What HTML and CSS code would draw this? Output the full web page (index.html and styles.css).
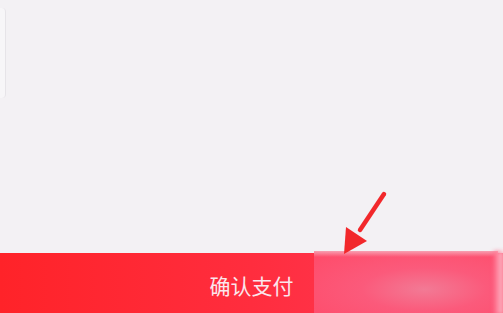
FILE: index.html
```html
<!DOCTYPE html>
<html lang="zh-CN">
<head>
<meta charset="utf-8">
<link rel="stylesheet" href="styles.css">
</head>
<body>
<div class="page">
  <div class="content">
    <div class="card"></div>
  </div>
  <div class="paybar">
    <button class="pay-btn">确认支付</button>
    <div class="blur-mask"></div>
  </div>
  <svg class="arrow" width="60" height="70" viewBox="0 0 60 70">
    <line x1="44" y1="4" x2="20" y2="40" stroke="#f2282b" stroke-width="4.5" stroke-linecap="round"/>
    <polygon points="6,37 4,64 27,51" fill="#f2282b"/>
  </svg>
</div>
</body>
</html>
```
FILE: styles.css
```css
html, body {
  margin: 0;
  padding: 0;
}
body {
  width: 503px;
  height: 313px;
  overflow: hidden;
  background: #f3f1f4;
  font-family: "Noto Sans CJK SC", "Noto Sans", sans-serif;
}
.page {
  position: relative;
  display: flex;
  flex-direction: column;
  height: 313px;
}
.content {
  flex: 1;
  padding-top: 8px;
}
.card {
  width: 5px;
  height: 90px;
  background: #f7f6f8;
  border-right: 1px solid #e6e4e8;
  border-radius: 0 4px 4px 0;
}
.paybar {
  position: relative;
  height: 60px;
}
.pay-btn {
  display: flex;
  align-items: flex-start;
  justify-content: center;
  width: 100%;
  height: 100%;
  border: 0;
  margin: 0;
  padding: 20px 0 0 0;
  background: linear-gradient(90deg, #ff2329 0%, #ff2d3e 50%, #ff3d5b 100%);
  color: #fbe6ec;
  font-family: "Noto Sans CJK SC", sans-serif;
  font-size: 21px;
  line-height: 24px;
}
.blur-mask {
  position: absolute;
  left: 314px;
  top: -2px;
  width: 184px;
  height: 64px;
  background: radial-gradient(ellipse at 60% 60%, #f27a95 0%, #fb5a7b 40%, #ff4a68 100%);
}
.blur-mask::before {
  content: "";
  position: absolute;
  left: 0;
  top: 0;
  width: 100%;
  height: 6px;
  background: linear-gradient(180deg, #f7a0b2, rgba(255, 74, 104, 0));
}
.blur-mask::after {
  content: "";
  position: absolute;
  right: -6px;
  top: 0;
  width: 10px;
  height: 100%;
  background: linear-gradient(90deg, #ff6685, #fbc4d0);
  filter: blur(2px);
}
.arrow {
  position: absolute;
  left: 340px;
  top: 190px;
}
```
